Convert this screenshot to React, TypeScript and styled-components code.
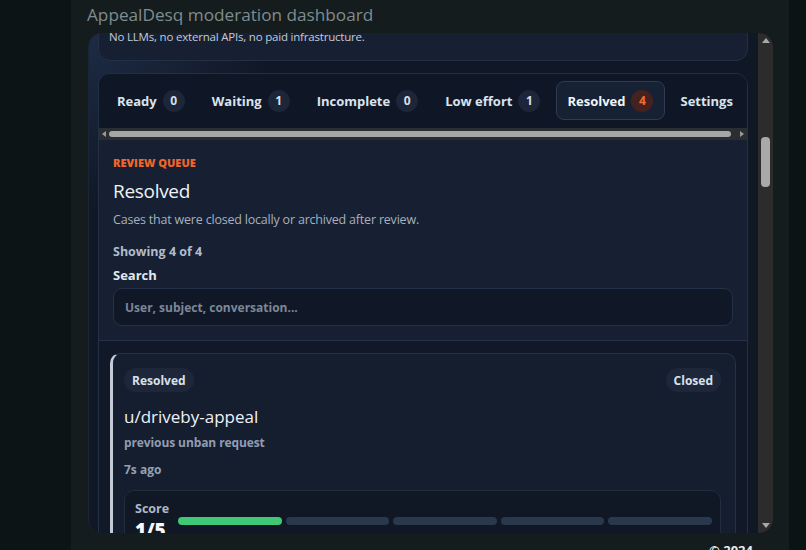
import React, { useLayoutEffect, useRef } from "react";
import styled, { createGlobalStyle } from "styled-components";

const GlobalStyle = createGlobalStyle`
  html, body { margin: 0; padding: 0; background: #0d1416; }
  body {
    width: 806px;
    height: 550px;
    overflow: hidden;
    font-family: "Open Sans", "Noto Sans", sans-serif;
    -webkit-font-smoothing: antialiased;
  }
  * { box-sizing: border-box; }
`;

const Page = styled.div`
  display: grid;
  grid-template-columns: 71px 718px 1fr;
  height: 550px;
`;

const Rail = styled.div<{ $tone: string }>`
  background: ${(p) => p.$tone};
`;

const Main = styled.main`
  background: #141c1e;
  padding: 0 16px 0 17px;
  display: flex;
  flex-direction: column;
  overflow: hidden;
`;

const PageTitle = styled.h1`
  flex: none;
  margin: 0 0 0 -1px;
  height: 33px;
  padding-top: 2px;
  font-size: 17.2px;
  line-height: 26px;
  font-weight: 400;
  color: #7f8c8e;
  white-space: nowrap;
`;

const Panel = styled.section`
  height: 500px;
  flex: none;
  display: flex;
  border-radius: 14px;
  overflow: hidden;
  border-left: 1px solid #1b2536;
  background:
    radial-gradient(circle at 0% 0%, rgba(40, 58, 92, 0.55), rgba(40, 58, 92, 0) 180px),
    #101826;
`;

const Viewport = styled.div`
  flex: 1;
  min-width: 0;
  overflow: hidden;
  padding: 0 10px 0 9px;
`;

const Stack = styled.div`
  display: flex;
  flex-direction: column;
  gap: 12px;
  padding-bottom: 40px;
`;

const HeroCard = styled.div`
  background: #162032;
  border: 1px solid #223046;
  border-radius: 12px;
  padding: 20px 10px 14px;
  display: flex;
  flex-direction: column;
  gap: 8px;
`;

const HeroEyebrow = styled.div`
  font-size: 11px;
  font-weight: 700;
  letter-spacing: 0.04em;
  text-transform: uppercase;
  color: #f26b2c;
`;

const HeroHeading = styled.h2`
  margin: 0;
  font-size: 22px;
  font-weight: 400;
  color: #e8edf3;
`;

const HeroText = styled.p`
  margin: 0;
  font-size: 11.5px;
  letter-spacing: -0.2px;
  line-height: 19px;
  color: #c3cbd7;
`;

const QueueCard = styled.div`
  background: #162032;
  border: 1px solid #223046;
  border-radius: 12px;
  overflow: hidden;
`;

const TabBar = styled.div`
  background: #0f1727;
`;

const TabStrip = styled.div`
  display: flex;
  gap: 4px;
  padding: 7px 7px 7px;
  overflow: hidden;
  white-space: nowrap;
`;

const Tab = styled.button<{ $active?: boolean }>`
  flex: none;
  display: flex;
  align-items: center;
  gap: 6px;
  height: 39px;
  padding: 0 11px 0 10px;
  border-radius: 8px;
  border: 1px solid ${(p) => (p.$active ? "#2f3b51" : "transparent")};
  background: ${(p) => (p.$active ? "#172134" : "transparent")};
  font-family: inherit;
  font-size: 13px;
  font-weight: 700;
  color: ${(p) => (p.$active ? "#f1f5f9" : "#dbe3ee")};
  cursor: pointer;
`;

const Count = styled.span<{ $active?: boolean }>`
  display: inline-flex;
  align-items: center;
  justify-content: center;
  width: 22px;
  height: 22px;
  border-radius: 50%;
  font-size: 12px;
  font-weight: 700;
  background: ${(p) => (p.$active ? "#45221f" : "#1c2638")};
  color: ${(p) => (p.$active ? "#f26b2c" : "#d6deea")};
`;

const HScrollbar = styled.div`
  height: 12px;
  margin-top: 1px;
  background: #2a2d32;
  display: flex;
  align-items: center;
`;

const ArrowBox = styled.span<{ $w: number }>`
  flex: none;
  width: ${(p) => p.$w}px;
  height: 12px;
  display: flex;
  align-items: center;
  justify-content: center;
`;

const TriLeft = styled.span`
  width: 0;
  height: 0;
  border-top: 3.5px solid transparent;
  border-bottom: 3.5px solid transparent;
  border-right: 4px solid #9a9a9a;
`;

const TriRight = styled.span`
  width: 0;
  height: 0;
  border-top: 3.5px solid transparent;
  border-bottom: 3.5px solid transparent;
  border-left: 4px solid #9a9a9a;
`;

const HThumb = styled.span`
  flex: 1;
  height: 6px;
  border-radius: 3px;
  background: #a6a6a6;
  margin-right: 6px;
`;

const QueueHeader = styled.div`
  padding: 16px 14px 14px;
  border-bottom: 1px solid #243148;
  display: flex;
  flex-direction: column;
`;

const Eyebrow = styled.div`
  font-size: 11px;
  line-height: 14px;
  font-weight: 800;
  text-transform: uppercase;
  color: #f2652a;
`;

const QueueTitle = styled.h2`
  margin: 8px 0 0;
  font-size: 19px;
  letter-spacing: -0.3px;
  line-height: 26px;
  font-weight: 400;
  color: #eef2f7;
`;

const QueueDesc = styled.p`
  margin: 6px 0 0;
  font-size: 12.5px;
  letter-spacing: -0.2px;
  line-height: 20px;
  color: #a6b0be;
`;

const Meta = styled.div`
  margin-top: 13px;
  font-size: 12.5px;
  line-height: 18px;
  font-weight: 700;
  color: #b0bccb;
`;

const FieldLabel = styled.label`
  margin-top: 5px;
  font-size: 13px;
  line-height: 18px;
  font-weight: 700;
  color: #e2e8f0;
`;

const SearchInput = styled.input`
  margin-top: 4px;
  height: 38px;
  width: 100%;
  border-radius: 9px;
  border: 1px solid #233046;
  background: #101827;
  padding: 0 11px;
  font-family: inherit;
  font-size: 12px;
  font-weight: 700;
  color: #e2e8f0;
  outline: none;
  &::placeholder { color: #7c8798; }
`;

const CaseList = styled.div`
  background: #111928;
  padding: 12px 11px;
  display: flex;
  flex-direction: column;
  gap: 12px;
`;

const CaseCard = styled.article`
  background: #151e2f;
  border: 1px solid #243146;
  border-left: 3px solid #c3cbd6;
  border-radius: 10px;
  padding: 14px 14px 14px 11px;
  display: flex;
  flex-direction: column;
`;

const PillRow = styled.div`
  display: flex;
  justify-content: space-between;
  align-items: center;
`;

const Pill = styled.span`
  height: 24px;
  display: inline-flex;
  align-items: center;
  padding: 0 8px;
  border-radius: 12px;
  background: #1d2739;
  font-size: 12px;
  font-weight: 700;
  color: #d9e1eb;
`;

const CaseUser = styled.h3`
  margin: 13px 0 0;
  font-size: 17px;
  line-height: 24px;
  font-weight: 400;
  color: #eef2f7;
`;

const CaseSubject = styled.div`
  margin-top: 6px;
  font-size: 12px;
  letter-spacing: -0.1px;
  line-height: 16px;
  font-weight: 700;
  color: #909db1;
`;

const CaseAge = styled.div`
  margin-top: 11px;
  font-size: 12px;
  line-height: 16px;
  font-weight: 700;
  color: #94a1b4;
`;

const ScoreBox = styled.div`
  margin-top: 12px;
  background: #101826;
  border: 1px solid #212c3f;
  border-radius: 10px;
  padding: 9px 8px 12px 10px;
  display: flex;
  align-items: center;
  gap: 9px;
`;

const ScoreLabel = styled.div`
  display: flex;
  flex-direction: column;
`;

const ScoreCaption = styled.span`
  font-size: 12.5px;
  line-height: 18px;
  font-weight: 700;
  color: #aeb8c6;
`;

const ScoreValue = styled.span`
  margin-top: 1px;
  font-size: 19px;
  line-height: 22px;
  font-weight: 800;
  color: #f8fafc;
`;

const Bars = styled.div`
  flex: 1;
  display: flex;
  gap: 4px;
`;

const Bar = styled.span<{ $on: boolean }>`
  flex: 1;
  height: 8px;
  border-radius: 4px;
  background: ${(p) => (p.$on ? "#41c877" : "#2a384d")};
`;

const VScrollbar = styled.div`
  flex: none;
  width: 15px;
  background: #2c2c2c;
  display: flex;
  flex-direction: column;
`;

const VArrow = styled.span`
  flex: none;
  height: 15px;
  display: flex;
  align-items: center;
  justify-content: center;
`;

const TriUp = styled.span`
  width: 0;
  height: 0;
  border-left: 4px solid transparent;
  border-right: 4px solid transparent;
  border-bottom: 5px solid #a8a8a8;
`;

const TriDown = styled.span`
  width: 0;
  height: 0;
  border-left: 4px solid transparent;
  border-right: 4px solid transparent;
  border-top: 5px solid #a8a8a8;
`;

const VTrack = styled.div`
  flex: 1;
  padding: 89px 3px 0;
`;

const VThumb = styled.div`
  height: 50px;
  border-radius: 4px;
  background: #a9a9a9;
`;

const Footer = styled.footer`
  flex: none;
  display: flex;
  justify-content: flex-end;
  padding: 8px 20px 0 0;
  font-size: 13px;
  line-height: 18px;
  font-weight: 700;
  color: #e5e9ef;
`;

const tabs = [
  { label: "Ready", count: 0 },
  { label: "Waiting", count: 1 },
  { label: "Incomplete", count: 0 },
  { label: "Low effort", count: 1 },
  { label: "Resolved", count: 4, active: true },
  { label: "Settings" },
];

export default function App() {
  const viewportRef = useRef<HTMLDivElement>(null);
  const heroRef = useRef<HTMLDivElement>(null);

  useLayoutEffect(() => {
    const vp = viewportRef.current;
    const hero = heroRef.current;
    if (!vp || !hero) return;
    const heroBottom =
      hero.getBoundingClientRect().bottom - vp.getBoundingClientRect().top + vp.scrollTop;
    vp.scrollTop = Math.max(0, heroBottom - 28);
  }, []);

  return (
    <>
      <GlobalStyle />
      <Page>
        <Rail $tone="#0d1416" />
        <Main>
          <PageTitle>AppealDesq moderation dashboard</PageTitle>
          <Panel>
            <Viewport ref={viewportRef}>
              <Stack>
                <HeroCard ref={heroRef}>
                  <HeroEyebrow>Local-first moderation</HeroEyebrow>
                  <HeroHeading>Ban appeal triage for moderators</HeroHeading>
                  <HeroText>Scores and sorts incoming appeals with simple local rules.</HeroText>
                  <HeroText>No LLMs, no external APIs, no paid infrastructure.</HeroText>
                </HeroCard>
                <QueueCard>
                  <TabBar>
                    <TabStrip>
                      {tabs.map((t) => (
                        <Tab key={t.label} $active={t.active}>
                          {t.label}
                          {t.count !== undefined && <Count $active={t.active}>{t.count}</Count>}
                        </Tab>
                      ))}
                    </TabStrip>
                    <HScrollbar>
                      <ArrowBox $w={10}><TriLeft /></ArrowBox>
                      <HThumb />
                      <ArrowBox $w={10}><TriRight /></ArrowBox>
                    </HScrollbar>
                  </TabBar>
                  <QueueHeader>
                    <Eyebrow>Review queue</Eyebrow>
                    <QueueTitle>Resolved</QueueTitle>
                    <QueueDesc>Cases that were closed locally or archived after review.</QueueDesc>
                    <Meta>Showing 4 of 4</Meta>
                    <FieldLabel htmlFor="search">Search</FieldLabel>
                    <SearchInput id="search" placeholder="User, subject, conversation..." />
                  </QueueHeader>
                  <CaseList>
                    <CaseCard>
                      <PillRow>
                        <Pill>Resolved</Pill>
                        <Pill>Closed</Pill>
                      </PillRow>
                      <CaseUser>u/driveby-appeal</CaseUser>
                      <CaseSubject>previous unban request</CaseSubject>
                      <CaseAge>7s ago</CaseAge>
                      <ScoreBox>
                        <ScoreLabel>
                          <ScoreCaption>Score</ScoreCaption>
                          <ScoreValue>1/5</ScoreValue>
                        </ScoreLabel>
                        <Bars>
                          {[0, 1, 2, 3, 4].map((i) => (
                            <Bar key={i} $on={i < 1} />
                          ))}
                        </Bars>
                      </ScoreBox>
                    </CaseCard>
                  </CaseList>
                </QueueCard>
              </Stack>
            </Viewport>
            <VScrollbar>
              <VArrow><TriUp /></VArrow>
              <VTrack><VThumb /></VTrack>
              <VArrow><TriDown /></VArrow>
            </VScrollbar>
          </Panel>
          <Footer>© 2024</Footer>
        </Main>
        <Rail $tone="#0c1314" />
      </Page>
    </>
  );
}
